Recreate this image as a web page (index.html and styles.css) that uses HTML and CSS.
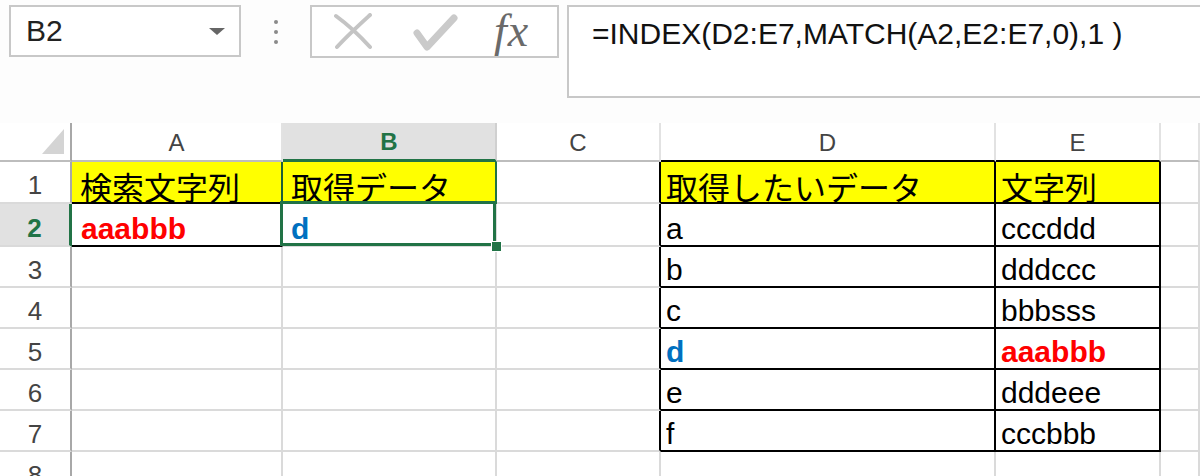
FILE: index.html
```html
<!DOCTYPE html>
<html lang="ja">
<head>
    <meta charset="UTF-8">
    <title>INDEX MATCH</title>
    <link rel="stylesheet" href="styles.css">
</head>
<body>
    <div class="toolbar">
        <div class="name-box">
            <span class="name">B2</span>
            <span class="drop"></span>
        </div>
        <div class="grip"><i></i><i></i><i></i></div>
        <div class="fx-buttons">
            <svg class="ico-cancel" width="40" height="37" viewBox="0 0 40 37">
                <path d="M3 3 C14 11 27 23 37 34 M37 2 C25 13 14 23 4 34" stroke="#c4c4c4" stroke-width="4" fill="none" stroke-linecap="round"/>
            </svg>
            <svg class="ico-enter" width="45" height="38" viewBox="0 0 45 38">
                <path d="M4 19 L14 33 L41 4" stroke="#cacaca" stroke-width="7" fill="none" stroke-linecap="round" stroke-linejoin="round"/>
            </svg>
            <span class="fx">fx</span>
        </div>
        <div class="formula">=INDEX(D2:E7,MATCH(A2,E2:E7,0),1 )</div>
    </div>

    <div class="sheet">
        <!-- column headers -->
        <div class="cell corner"><div class="corner-tri"></div></div>
        <div class="cell hd">A</div>
        <div class="cell hd hd-sel">B</div>
        <div class="cell hd">C</div>
        <div class="cell hd hd-tb">D</div>
        <div class="cell hd hd-tb">E</div>
        <div class="cell hd"></div>

        <!-- row 1 -->
        <div class="cell rh">1</div>
        <div class="cell yel jp a1">検索文字列</div>
        <div class="cell yel jp b1">取得データ</div>
        <div class="cell tl"></div>
        <div class="cell yel jp tb">取得したいデータ</div>
        <div class="cell yel jp tb">文字列</div>
        <div class="cell"></div>

        <!-- row 2 -->
        <div class="cell rh rh-sel">2</div>
        <div class="cell red a2">aaabbb</div>
        <div class="cell blue b2">d<div class="sel-box"></div><div class="fill-handle"></div></div>
        <div class="cell tl"></div>
        <div class="cell tb">a</div>
        <div class="cell tb">cccddd</div>
        <div class="cell"></div>

        <!-- row 3 -->
        <div class="cell rh">3</div>
        <div class="cell"></div>
        <div class="cell"></div>
        <div class="cell tl"></div>
        <div class="cell tb">b</div>
        <div class="cell tb">dddccc</div>
        <div class="cell"></div>

        <!-- row 4 -->
        <div class="cell rh">4</div>
        <div class="cell"></div>
        <div class="cell"></div>
        <div class="cell tl"></div>
        <div class="cell tb">c</div>
        <div class="cell tb">bbbsss</div>
        <div class="cell"></div>

        <!-- row 5 -->
        <div class="cell rh">5</div>
        <div class="cell"></div>
        <div class="cell"></div>
        <div class="cell tl"></div>
        <div class="cell tb blue">d</div>
        <div class="cell tb red">aaabbb</div>
        <div class="cell"></div>

        <!-- row 6 -->
        <div class="cell rh">6</div>
        <div class="cell"></div>
        <div class="cell"></div>
        <div class="cell tl"></div>
        <div class="cell tb">e</div>
        <div class="cell tb">dddeee</div>
        <div class="cell"></div>

        <!-- row 7 -->
        <div class="cell rh">7</div>
        <div class="cell"></div>
        <div class="cell"></div>
        <div class="cell tl"></div>
        <div class="cell tb">f</div>
        <div class="cell tb">cccbbb</div>
        <div class="cell"></div>

        <!-- row 8 -->
        <div class="cell rh">8</div>
        <div class="cell"></div>
        <div class="cell"></div>
        <div class="cell"></div>
        <div class="cell"></div>
        <div class="cell"></div>
        <div class="cell"></div>
    </div>
</body>
</html>
```

FILE: styles.css
```css
body {
    margin: 0;
    width: 1200px;
    height: 476px;
    overflow: hidden;
    background-color: #fdfdfd;
    font-family: "Liberation Sans", Arial, sans-serif;
}
.toolbar {
    display: flex;
    align-items: flex-start;
    height: 123px;
    padding: 5px 0 0 9px;
    box-sizing: border-box;
    overflow: hidden;
}
.toolbar > * {
    flex: none;
}
.name-box {
    width: 232px;
    height: 52px;
    border: 2px solid #c8c8c8;
    background-color: #ffffff;
    box-sizing: border-box;
    display: flex;
    align-items: center;
    justify-content: space-between;
    padding: 0 14px 0 15px;
}
.name {
    font-size: 30px;
    color: #222222;
}
.drop {
    width: 0;
    height: 0;
    border-left: 8px solid transparent;
    border-right: 8px solid transparent;
    border-top: 7px solid #666666;
}
.grip {
    width: 69px;
    display: flex;
    flex-direction: column;
    align-items: center;
    gap: 6px;
    padding-top: 15px;
}
.grip i {
    display: block;
    width: 4px;
    height: 4px;
    border-radius: 50%;
    background-color: #8a8a8a;
}
.fx-buttons {
    width: 249px;
    height: 53px;
    border: 2px solid #c8c8c8;
    background-color: #ffffff;
    box-sizing: border-box;
    display: flex;
    align-items: center;
    padding-left: 21px;
}
.ico-enter {
    margin-left: 40px;
    margin-top: 2px;
}
.fx {
    margin-left: 36px;
    font-family: "Liberation Serif", "Times New Roman", serif;
    font-style: italic;
    font-size: 46px;
    color: #6a6a6a;
    letter-spacing: 1px;
    line-height: 1;
    margin-top: -2px;
}
.formula {
    width: 660px;
    height: 93px;
    margin-left: 8px;
    border: 2px solid #c8c8c8;
    background-color: #ffffff;
    box-sizing: border-box;
    padding: 12px 0 0 23px;
    font-size: 30px;
    line-height: 30px;
    color: #111111;
    white-space: nowrap;
}

.sheet {
    display: grid;
    grid-template-columns: 72px 211px 214px 164px 335px 165px 39px;
    grid-template-rows: 39px 42px 43px repeat(6, 41px);
    background-color: #ffffff;
}
.cell {
    box-sizing: border-box;
    border-right: 2px solid #dadada;
    border-bottom: 2px solid #dadada;
    display: flex;
    align-items: flex-end;
    padding: 0 4px 1px 6px;
    font-size: 30px;
    line-height: 1;
    color: #000000;
    white-space: nowrap;
}
.corner {
    justify-content: flex-end;
    padding: 0 6px 6px 0;
    border-right-color: #a8a8a8;
    border-bottom-color: #bdbdbd;
}
.corner-tri {
    width: 22px;
    height: 25px;
    background-color: #d4d4d4;
    clip-path: polygon(100% 0, 100% 100%, 0 100%);
}
.hd {
    justify-content: center;
    align-items: center;
    padding: 2px 0 0;
    font-size: 24px;
    color: #444444;
    border-right-color: #e2e2e2;
    border-bottom-color: #bdbdbd;
}
.hd-sel {
    background-color: #e1e1e1;
    color: #217346;
    font-weight: bold;
    border-bottom: 3px solid #217346;
    border-right-color: #d0d0d0;
}
.hd-tb {
    border-bottom-color: #000000;
}
.rh {
    justify-content: center;
    align-items: center;
    padding: 6px 0 0;
    font-size: 26px;
    color: #444444;
    border-right-color: #a8a8a8;
}
.rh-sel {
    background-color: #e1e1e1;
    color: #217346;
    font-weight: bold;
    border-right: 3px solid #217346;
}
.yel {
    background-color: #ffff00;
}
.jp {
    font-family: "Noto Sans CJK JP", sans-serif;
    font-size: 32px;
    padding-bottom: 0;
    padding-left: 8px;
}
.red {
    color: #ff0000;
    font-weight: bold;
}
.blue {
    color: #0070c0;
    font-weight: bold;
}
.a1 {
    border-right-color: #1d5e38;
    border-bottom-color: #000000;
}
.b1 {
    border-right-color: #217346;
    border-bottom-color: #217346;
}
.a2 {
    padding-left: 9px;
    border-bottom-color: #000000;
}
.b2 {
    position: relative;
    padding-left: 8px;
}
.sel-box {
    position: absolute;
    top: -3px;
    left: -3px;
    right: -1px;
    bottom: -1px;
    border: 3px solid #217346;
}
.fill-handle {
    position: absolute;
    right: -7px;
    bottom: -7px;
    width: 9px;
    height: 9px;
    background-color: #217346;
    border: 1px solid #ffffff;
}
.tl {
    border-right-color: #000000;
}
.tb {
    border-right-color: #000000;
    border-bottom-color: #000000;
    padding-left: 5px;
}
```
